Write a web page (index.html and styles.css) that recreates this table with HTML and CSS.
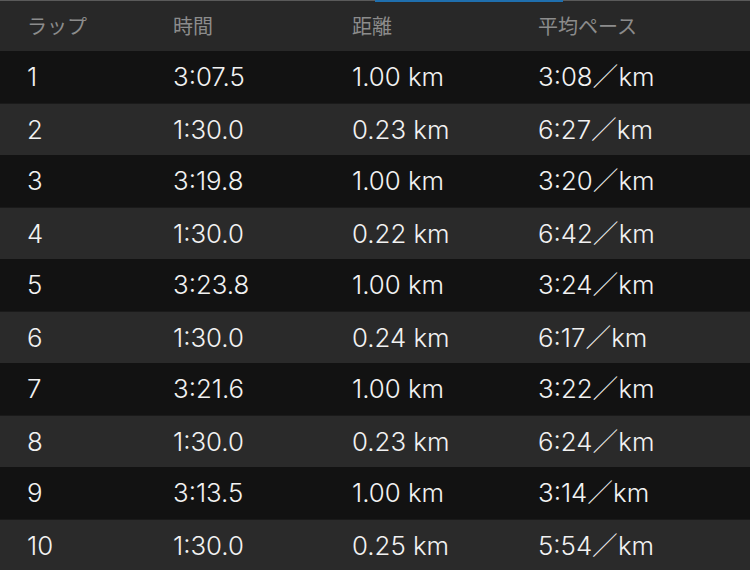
FILE: index.html
```html
<!DOCTYPE html>
<html lang="ja">
<head>
<meta charset="utf-8">
<link rel="stylesheet" href="styles.css">
</head>
<body>
<div class="topbar"><div class="indicator"></div></div>
<div class="table">
  <div class="row head"><span>ラップ</span><span>時間</span><span>距離</span><span>平均ペース</span></div>
  <div class="row odd"><span>1</span><span>3:07.5</span><span>1.00 km</span><span>3:08／km</span></div>
  <div class="row even"><span>2</span><span>1:30.0</span><span>0.23 km</span><span>6:27／km</span></div>
  <div class="row odd"><span>3</span><span>3:19.8</span><span>1.00 km</span><span>3:20／km</span></div>
  <div class="row even"><span>4</span><span>1:30.0</span><span>0.22 km</span><span>6:42／km</span></div>
  <div class="row odd"><span>5</span><span>3:23.8</span><span>1.00 km</span><span>3:24／km</span></div>
  <div class="row even"><span>6</span><span>1:30.0</span><span>0.24 km</span><span>6:17／km</span></div>
  <div class="row odd"><span>7</span><span>3:21.6</span><span>1.00 km</span><span>3:22／km</span></div>
  <div class="row even"><span>8</span><span>1:30.0</span><span>0.23 km</span><span>6:24／km</span></div>
  <div class="row odd"><span>9</span><span>3:13.5</span><span>1.00 km</span><span>3:14／km</span></div>
  <div class="row even"><span>10</span><span>1:30.0</span><span>0.25 km</span><span>5:54／km</span></div>
</div>
</body>
</html>
```
FILE: styles.css
```css
html, body {
  margin: 0;
  padding: 0;
  background: #111111;
  overflow: hidden;
}
body {
  width: 750px;
  height: 570px;
  font-family: "Inter", "Noto Sans CJK JP", sans-serif;
}
.topbar {
  height: 1px;
  background: #5a5a5a;
  position: relative;
}
.indicator {
  position: absolute;
  left: 375px;
  top: 0;
  width: 188px;
  height: 2px;
  background: #1f6fae;
}
.table {
  display: flex;
  flex-direction: column;
}
.row {
  display: grid;
  grid-template-columns: 146px 179px 186px 1fr;
  padding-left: 27px;
  align-items: center;
  height: 52px;
  color: #f2f2f2;
  font-size: 25.8px;
  font-weight: 300;
}
.row.head {
  height: 50px;
  background: #282828;
  color: #8c8c8c;
  font-size: 20px;
  font-weight: 400;
  font-family: "Noto Sans CJK JP", sans-serif;
}
.row.odd { background: #121212; }
.row.even { background: #2a2a2a; }
.row.odd + .row.even { border-top: 1px solid #1a1a1a; height: 51px; }
.row span { line-height: 1; }
```
